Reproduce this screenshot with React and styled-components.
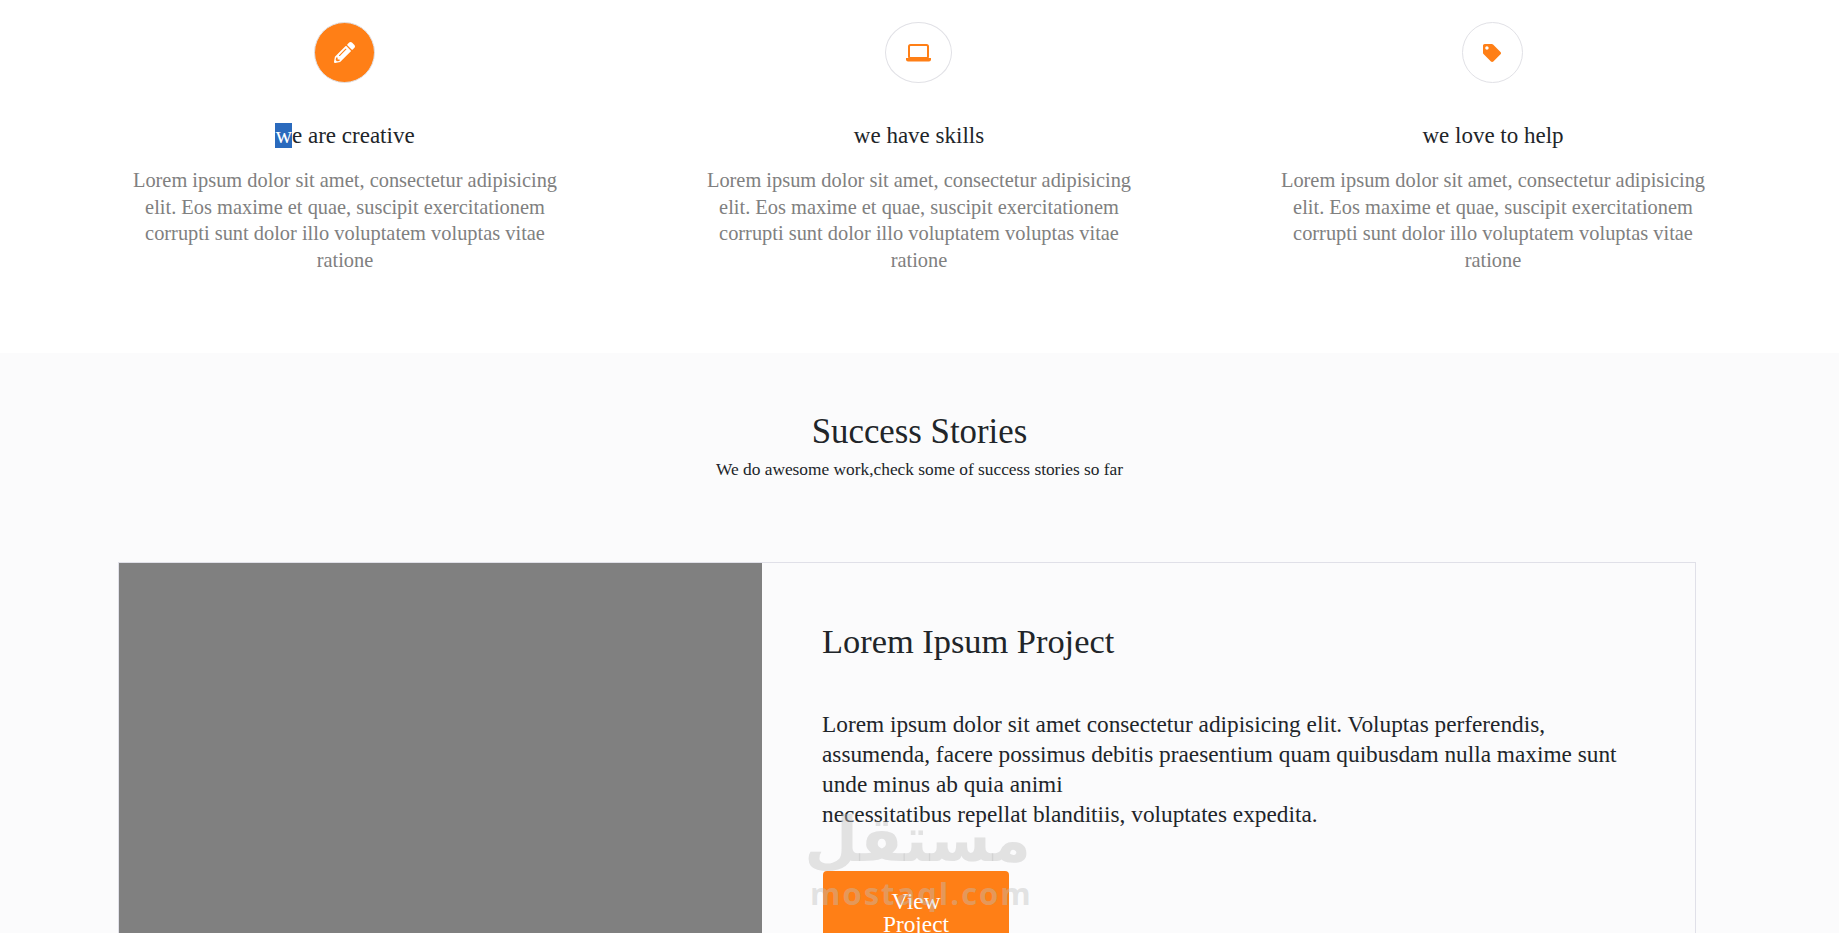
import React from "react";
import styled, { createGlobalStyle } from "styled-components";

const Global = createGlobalStyle`
  html, body { margin: 0; padding: 0; height: 933px; overflow: hidden; background: #fff; }
  body { font-family: "Liberation Serif", "DejaVu Serif", serif; color: #212529; }
`;
const Page = styled.div`position: relative; width: 1841px; height: 933px; overflow: hidden;`;
const Features = styled.section`
  height: 353px; display: grid; grid-template-columns: repeat(3, 574px); justify-content: center;
  padding: 22px 3px 0 0; box-sizing: border-box;
`;
const Feature = styled.div`display: flex; flex-direction: column; align-items: center; text-align: center;`;
const Circle = styled.div`
  width: ${p => p.$wide ? "67px" : "61px"}; height: 61px; border-radius: 50%; display: flex; align-items: center; justify-content: center;
  box-sizing: border-box; border: 1px solid #e1e1e6; margin-right: 2px;
  background: ${p => p.$active ? "#ff7f16" : "#fff"}; color: ${p => p.$active ? "#fff" : "#ff7f16"};
`;
const FeatureTitle = styled.h3`margin: 39px 0 0; font-size: 23px; font-weight: 400; line-height: 28px; color: #212529;`;
const Sel = styled.span`background: #2a6abd; color: #fff;`;
const FeatureText = styled.p`margin: 17px 0 0; width: 445px; font-size: 20.4px; line-height: 26.5px; color: #808080;`;
const Stories = styled.section`background: #fbfbfc; width: 1839px; height: 580px; padding-top: 59px; box-sizing: border-box;`;
const StoriesTitle = styled.h2`margin: 0; text-align: center; font-size: 34.8px; font-weight: 400; line-height: 40px; color: #212529;`;
const StoriesSub = styled.p`margin: 7px 0 0; text-align: center; font-size: 17.35px; line-height: 22px; color: #212529;`;
const Card = styled.div`
  display: flex; margin: 81px 0 0 118px; width: 1578px; height: 600px; box-sizing: border-box;
  border: 1px solid #e0e0e8;
`;
const Img = styled.div`width: 643px; background: #808080; flex: none;`;
const Body = styled.div`padding: 58px 60px 0; flex: 1; min-width: 0;`;
const CardTitle = styled.h3`margin: 0; font-size: 34.4px; font-weight: 400; line-height: 40px; color: #212529;`;
const CardText = styled.p`margin: 48px 0 0; font-size: 23.3px; line-height: 30px; color: #212529;`;
const Btn = styled.button`
  display: block; margin: 42px 0 0 1px; width: 186px; padding: 19px 50px; box-sizing: border-box;
  background: #ff7f16; border: none; border-radius: 4px; color: #fff; font: 23.3px/23px "Liberation Serif", serif; text-align: center;
`;
const Watermark = styled.div`
  position: absolute; left: 810px; top: 805px; width: 221px; text-align: center; pointer-events: none;
  color: rgba(190,190,190,.42); font-weight: 700;
`;
const WmAr = styled.div`font: 700 62px/70px "DejaVu Sans", sans-serif; white-space: nowrap;`;
const WmEn = styled.div`font: 700 31px/36px "Open Sans", sans-serif; white-space: nowrap; letter-spacing: 2px;`;

const Pencil = () => (
  <svg width="21" height="21" viewBox="0 0 512 512" fill="currentColor"><path d="M497.9 142.1l-46.1 46.1c-4.7 4.7-12.3 4.7-17 0l-111-111c-4.7-4.7-4.7-12.3 0-17l46.1-46.1c18.7-18.7 49.1-18.7 67.9 0l60.1 60.1c18.8 18.7 18.8 49.1 0 67.9zM284.2 99.8L21.6 362.4.4 483.9c-2.9 16.4 11.4 30.6 27.8 27.8l121.5-21.3 262.6-262.6c4.7-4.7 4.7-12.3 0-17l-111-111c-4.8-4.7-12.4-4.7-17.1 0zM124.1 339.9c-5.5-5.5-5.5-14.3 0-19.8l154-154c5.5-5.5 14.3-5.5 19.8 0s5.5 14.3 0 19.8l-154 154c-5.5 5.5-14.3 5.5-19.8 0zM88 424h48v36.3l-64.5 11.3-31.1-31.1L51.7 376H88v48z"/></svg>
);
const Laptop = () => (
  <svg width="25" height="18" viewBox="0 0 25 18" fill="none"><rect x="3" y="1" width="19" height="13" rx="1.5" stroke="currentColor" strokeWidth="2"/><path d="M0 14h25v1.5a2 2 0 0 1-2 2H2a2 2 0 0 1-2-2z" fill="currentColor"/></svg>
);
const Tag = () => (
  <svg width="18" height="18" viewBox="0 0 512 512" fill="currentColor"><path d="M0 252.118V48C0 21.49 21.49 0 48 0h204.118a48 48 0 0 1 33.941 14.059l211.882 211.882c18.745 18.745 18.745 49.137 0 67.882L293.823 497.941c-18.745 18.745-49.137 18.745-67.882 0L14.059 286.059A48 48 0 0 1 0 252.118zM112 64c-26.51 0-48 21.49-48 48s21.49 48 48 48 48-21.49 48-48-21.49-48-48-48z"/></svg>
);

const lorem = "Lorem ipsum dolor sit amet, consectetur adipisicing elit. Eos maxime et quae, suscipit exercitationem corrupti sunt dolor illo voluptatem voluptas vitae ratione";

export default function App() {
  return (
    <Page>
      <Global />
      <Features>
        <Feature>
          <Circle $active><Pencil /></Circle>
          <FeatureTitle><Sel>w</Sel>e are creative</FeatureTitle>
          <FeatureText>{lorem}</FeatureText>
        </Feature>
        <Feature>
          <Circle $wide><Laptop /></Circle>
          <FeatureTitle>we have skills</FeatureTitle>
          <FeatureText>{lorem}</FeatureText>
        </Feature>
        <Feature>
          <Circle><Tag /></Circle>
          <FeatureTitle>we love to help</FeatureTitle>
          <FeatureText>{lorem}</FeatureText>
        </Feature>
      </Features>
      <Stories>
        <StoriesTitle>Success Stories</StoriesTitle>
        <StoriesSub>We do awesome work,check some of success stories so far</StoriesSub>
        <Card>
          <Img />
          <Body>
            <CardTitle>Lorem Ipsum Project</CardTitle>
            <CardText>Lorem ipsum dolor sit amet consectetur adipisicing elit. Voluptas perferendis, assumenda, facere possimus debitis praesentium quam quibusdam nulla maxime sunt unde minus ab quia animi<br />necessitatibus repellat blanditiis, voluptates expedita.</CardText>
            <Btn>View Project</Btn>
          </Body>
        </Card>
      </Stories>
      <Watermark>
        <WmAr dir="rtl">مستقل</WmAr>
        <WmEn>mostaql.com</WmEn>
      </Watermark>
    </Page>
  );
}
